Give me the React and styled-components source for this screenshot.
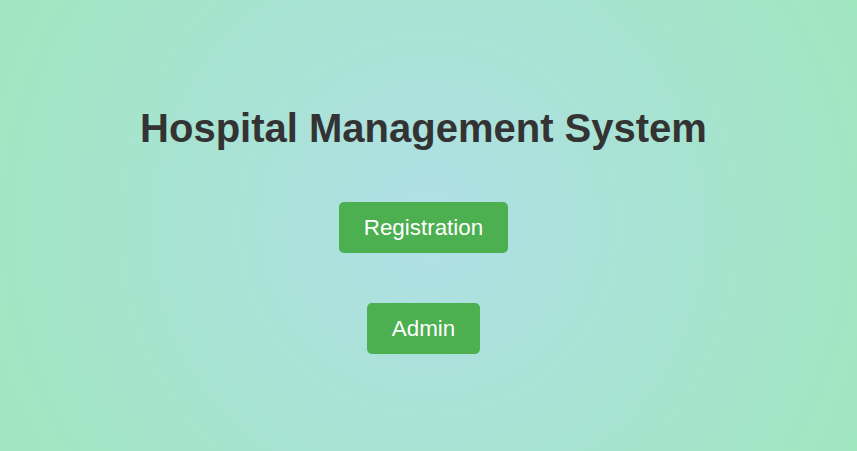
import styled, { createGlobalStyle } from 'styled-components';

const GlobalStyle = createGlobalStyle`
    html, body {
        margin: 0;
        padding: 0;
    }
    body {
        font-family: "Liberation Sans", Arial, sans-serif;
    }
`;

const Page = styled.main`
    display: flex;
    flex-direction: column;
    align-items: center;
    gap: 50px;
    box-sizing: border-box;
    height: 100vh;
    padding: 105px 10px 0 0;
    background: radial-gradient(circle at 50% 50%, #b0e0e6 0%, #a0e6bf 100%);
    overflow: hidden;
`;

const Title = styled.h1`
    margin: 0 0 1px 0;
    font-size: 40px;
    line-height: 46px;
    font-weight: bold;
    color: #333333;
`;

const Button = styled.button`
    font-family: "Liberation Sans", Arial, sans-serif;
    font-size: 22.4px;
    line-height: 25px;
    padding: 13px 25px;
    color: #ffffff;
    background-color: #4caf50;
    border: none;
    border-radius: 5px;
    cursor: pointer;
`;

const App = () => {
    return (
        <>
            <GlobalStyle />
            <Page>
                <Title>Hospital Management System</Title>
                <Button type="button">Registration</Button>
                <Button type="button">Admin</Button>
            </Page>
        </>
    );
};

export default App;
